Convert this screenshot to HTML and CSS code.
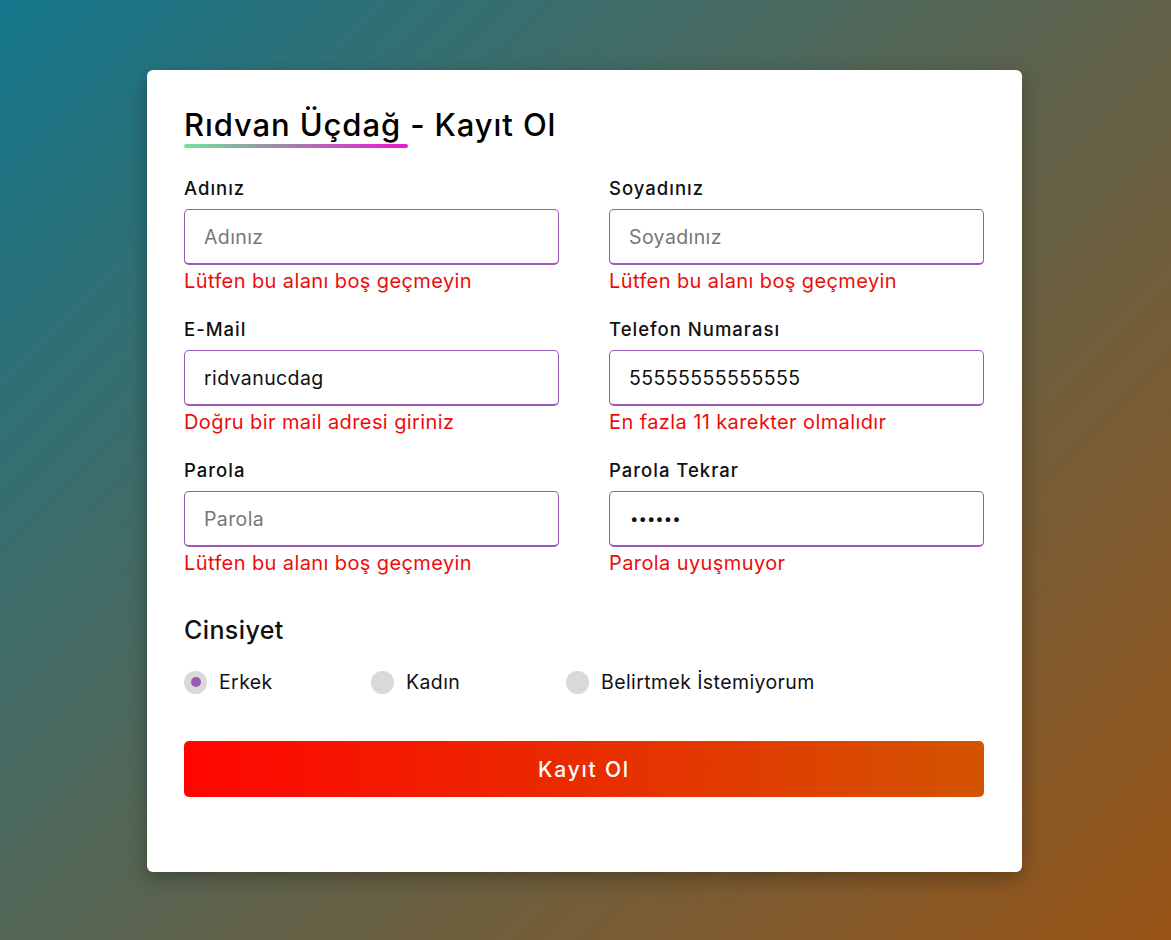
FILE: index.html
```html
<!DOCTYPE html>
<html lang="tr">
<head>
<meta charset="utf-8">
<title>Kayıt Ol</title>
<link rel="stylesheet" href="styles.css">
</head>
<body>
<div class="page">
  <form class="card">
    <h1 class="title"><span class="name">Rıdvan Üçdağ</span> - Kayıt Ol</h1>
    <div class="grid">
      <div class="field">
        <label class="label">Adınız</label>
        <input class="input" type="text" placeholder="Adınız">
        <div class="error">Lütfen bu alanı boş geçmeyin</div>
      </div>
      <div class="field">
        <label class="label">Soyadınız</label>
        <input class="input" type="text" placeholder="Soyadınız">
        <div class="error">Lütfen bu alanı boş geçmeyin</div>
      </div>
      <div class="field">
        <label class="label">E-Mail</label>
        <input class="input" type="text" value="ridvanucdag">
        <div class="error">Doğru bir mail adresi giriniz</div>
      </div>
      <div class="field">
        <label class="label">Telefon Numarası</label>
        <input class="input" type="text" value="55555555555555">
        <div class="error">En fazla 11 karekter olmalıdır</div>
      </div>
      <div class="field">
        <label class="label">Parola</label>
        <input class="input" type="password" placeholder="Parola">
        <div class="error">Lütfen bu alanı boş geçmeyin</div>
      </div>
      <div class="field">
        <label class="label">Parola Tekrar</label>
        <input class="input masked" type="password" value="123456">
        <div class="error">Parola uyuşmuyor</div>
      </div>
    </div>
    <div class="gender">
      <div class="gender-title">Cinsiyet</div>
      <div class="radios">
        <label class="radio r1"><span class="dot checked"></span>Erkek</label>
        <label class="radio r2"><span class="dot"></span>Kadın</label>
        <label class="radio r3"><span class="dot"></span>Belirtmek İstemiyorum</label>
      </div>
    </div>
    <button class="btn" type="button">Kayıt Ol</button>
  </form>
</div>
</body>
</html>
```
FILE: styles.css
```css
* { box-sizing: border-box; }
html, body { margin: 0; height: 100%; }
body {
  font-family: Inter, "Noto Sans", sans-serif;
  background: linear-gradient(135deg, #15788d 0%, #5a6450 50%, #9a5416 100%);
  min-height: 940px;
}
.page {
  display: flex;
  justify-content: center;
  padding-top: 70px;
}
.card {
  width: 875px;
  height: 802px;
  background: #fff;
  border-radius: 6px;
  box-shadow: 0 6px 20px rgba(0,0,0,0.3);
  padding: 36px 38px 0 37px;
  margin-left: -2px;
}
.title {
  margin: 0 0 32px;
  font-size: 31px;
  font-weight: 500;
  letter-spacing: 0.9px;
  color: #000;
  line-height: 38px;
}
.name {
  position: relative;
  display: inline-block;
}
.name::after {
  content: "";
  position: absolute;
  left: 0;
  right: -7px;
  bottom: -4px;
  height: 4px;
  border-radius: 2px;
  background: linear-gradient(90deg, #71e3a0, #9a8fa6 40%, #ef14d4);
}
.grid {
  display: grid;
  grid-template-columns: 375px 375px;
  column-gap: 50px;
  row-gap: 20px;
}
.field { display: flex; flex-direction: column; }
.label {
  font-size: 18.5px;
  font-weight: 500;
  letter-spacing: 1px;
  color: #111;
  line-height: 24px;
  margin-bottom: 9px;
}
.input {
  height: 56px;
  border: 1px solid #9b59b6;
  border-bottom-width: 2px;
  border-radius: 5px;
  padding: 0 19px;
  font-family: inherit;
  font-size: 19.5px;
  letter-spacing: 0.4px;
  color: #111;
  outline: none;
}
.input::placeholder { color: #777; }
.input.masked { font-size: 15px; letter-spacing: 0; padding-left: 20px; }
.error {
  color: #ec0c0c;
  font-size: 20px;
  letter-spacing: 0.4px;
  line-height: 32px;
}
.gender { margin-top: 35px; }
.gender-title {
  font-size: 25px;
  font-weight: 500;
  letter-spacing: 0.4px;
  color: #111;
  line-height: 32px;
}
.radios {
  display: flex;
  margin-top: 22px;
  height: 28px;
  align-items: center;
}
.radio {
  display: flex;
  align-items: center;
  gap: 12px;
  font-size: 19.5px;
  letter-spacing: 0.4px;
  color: #111;
}
.r1 { width: 187px; }
.r2 { width: 195px; }
.dot {
  width: 23px;
  height: 23px;
  border-radius: 50%;
  background: #d9d9d9;
  display: flex;
  align-items: center;
  justify-content: center;
}
.dot.checked::after {
  content: "";
  width: 10px;
  height: 10px;
  border-radius: 50%;
  background: #9b59b6;
}
.btn {
  display: block;
  width: 800px;
  height: 56px;
  margin-top: 45px;
  border: 0;
  border-radius: 5px;
  background: linear-gradient(90deg, #ff0500, #d35400);
  color: #fff;
  font-family: inherit;
  font-size: 21px;
  font-weight: 500;
  letter-spacing: 1.8px;
}
```
